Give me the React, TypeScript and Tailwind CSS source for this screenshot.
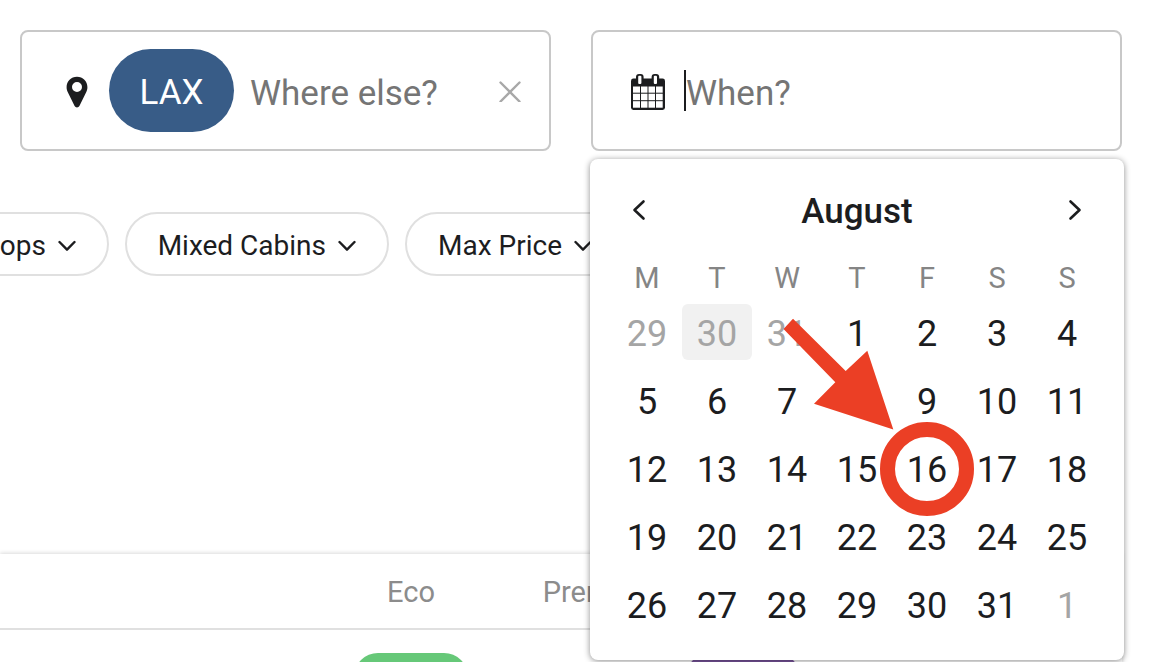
import { useState } from "react";

type Day = { n: number; muted?: boolean; today?: boolean; marked?: boolean };

const DAYS: Day[] = [
  { n: 29, muted: true },
  { n: 30, muted: true, today: true },
  { n: 31, muted: true },
  ...Array.from({ length: 31 }, (_, i) => ({ n: i + 1, marked: i + 1 === 16 })),
  { n: 1, muted: true },
];

const WEEKS = [0, 1, 2, 3, 4].map((w) => DAYS.slice(w * 7, w * 7 + 7));
const WEEKDAYS = ["M", "T", "W", "T", "F", "S", "S"];

function PinIcon() {
  return (
    <svg className="mt-0.5 h-8 w-[22px] shrink-0" viewBox="0 0 22 32" aria-hidden="true">
      <path
        fill="#1c1d1f"
        fillRule="evenodd"
        d="M11 .8C5.100.8.6 5.300.6 11c0 2 .3 3.300 1.100 4.900l6.900 14.200c.9 1.900 3.900 1.900 4.800 0l6.900-14.200c.8-1.600 1.100-2.900 1.100-4.900C21.400 5.300 16.900.8 11 .8zM11 6a5 5 0 1 1 0 10 5 5 0 0 1 0-10z"
      />
    </svg>
  );
}

function CalendarIcon() {
  const cols = [
    [2, 7],
    [10, 6.5],
    [17.5, 6.5],
    [25, 6.7],
  ];
  const rows = [
    [12.5, 6.2],
    [19.7, 6.5],
    [27.2, 6.5],
  ];
  return (
    <svg className="mt-0.5 h-9 w-[34px] shrink-0" viewBox="0 0 34 36" aria-hidden="true">
      <rect x="0" y="4.600" width="34" height="31.400" rx="2.400" fill="#1c1d1f" />
      {rows.map(([y, h]) =>
        cols.map(([x, w]) => <rect key={`${x}-${y}`} x={x} y={y} width={w} height={h} fill="#fff" />),
      )}
      <rect x="5" y="0" width="7.600" height="12" rx="3" fill="#1c1d1f" />
      <rect x="20.600" y="0" width="7.600" height="12" rx="3" fill="#1c1d1f" />
      <rect x="7.200" y="1.800" width="3.200" height="8.200" rx="1" fill="#fff" />
      <rect x="22.800" y="1.800" width="3.200" height="8.200" rx="1" fill="#fff" />
    </svg>
  );
}

function Chevron({ dir }: { dir: "left" | "right" }) {
  return (
    <svg className="h-6 w-4" viewBox="0 0 16 24" fill="none" stroke="#1c1d1f" strokeWidth="2.600" strokeLinecap="round" strokeLinejoin="round" aria-hidden="true">
      <path d={dir === "left" ? "M12.500 3.500 3.500 12l9 8.500" : "M3.500 3.500l9 8.500-9 8.500"} />
    </svg>
  );
}

function FilterPill({ label, className }: { label: string; className: string }) {
  return (
    <button
      type="button"
      className={`flex h-16 shrink-0 items-center justify-end gap-3 rounded-full border-2 border-[#e0e0e0] bg-white pt-1 pr-[31px] text-[28px] whitespace-nowrap ${className}`}
    >
      {label}
      <svg className="h-3 w-[18px]" viewBox="0 0 18 12" fill="none" stroke="#1c1d1f" strokeWidth="2.400" strokeLinecap="round" strokeLinejoin="round" aria-hidden="true">
        <path d="M1.500 2 9 9.700 16.500 2" />
      </svg>
    </button>
  );
}

function Pointer() {
  return (
    <svg
      className="pointer-events-none absolute top-[-125px] left-1/2 z-10 -ml-[147px] h-[205px] w-[200px] max-w-none"
      viewBox="780 315 200 205"
      aria-hidden="true"
    >
      <path fill="#eb3f25" d="M783.500 329 793 318.700 845.700 371 867.300 350.700 893.300 429.500 814 403.700 835.300 382.300z" />
      <circle cx="927" cy="469" r="39.500" fill="none" stroke="#eb3f25" strokeWidth="15" />
    </svg>
  );
}

function DatePicker() {
  const [, setSelected] = useState(16);
  return (
    <div className="absolute top-full right-[-2px] left-[-1px] z-10 mt-2 rounded-lg bg-white px-[22px] pt-[23px] pb-[22px] shadow-[0_1px_6px_rgba(0,0,0,0.45)]">
      <div className="flex h-14 items-center justify-between px-[19px]">
        <button type="button" aria-label="Previous month">
          <Chevron dir="left" />
        </button>
        <h2 className="pt-0.5 text-[35px] leading-none font-medium">August</h2>
        <button type="button" aria-label="Next month">
          <Chevron dir="right" />
        </button>
      </div>
      <table className="mt-5 w-full table-fixed border-collapse">
        <thead>
          <tr className="h-10">
            {WEEKDAYS.map((d, i) => (
              <th key={i} scope="col" className="p-0 text-[29px] leading-none font-normal text-[#858585]">
                {d}
              </th>
            ))}
          </tr>
        </thead>
        <tbody>
          {WEEKS.map((week, w) => (
            <tr key={w} className="h-[68px]">
              {week.map((day, i) => (
                <td key={i} className="p-0">
                  <div className="relative">
                    <button
                      type="button"
                      onClick={() => setSelected(day.n)}
                      className={`block h-14 w-full rounded-md pt-1 text-[36px] leading-none ${day.muted ? "text-[#a5a5a5]" : ""} ${day.today ? "bg-[#f1f1f1]" : ""}`}
                    >
                      {day.n}
                    </button>
                    {day.marked && <Pointer />}
                  </div>
                </td>
              ))}
            </tr>
          ))}
        </tbody>
      </table>
    </div>
  );
}

export default function App() {
  return (
    <div className="flex h-screen flex-col overflow-hidden bg-white font-['Roboto',sans-serif] text-[#1c1d1f]">
      <div className="grid grid-cols-2 gap-10 pt-[30px] pr-[30px] pl-5">
        <div className="flex h-[121px] items-center rounded-lg border-2 border-[#c8c8c8] pr-5 pl-11">
          <PinIcon />
          <span className="mr-4 ml-[21px] flex h-[83px] w-[125px] shrink-0 items-center justify-center rounded-full bg-[#385c87] pt-1.5 text-[35px] text-white">
            LAX
          </span>
          <input
            type="text"
            aria-label="Destination"
            placeholder="Where else?"
            className="h-14 min-w-0 flex-1 pt-1.5 text-[35px] outline-none placeholder:text-[#757575]"
          />
          <button type="button" aria-label="Clear" className="p-2">
            <svg className="h-[22px] w-[22px]" viewBox="0 0 22 22" fill="none" stroke="#a8a8a8" strokeWidth="2.400" strokeLinecap="round" aria-hidden="true">
              <path d="M1.500 2.500l19 19M20.500 2.500l-19 19" />
            </svg>
          </button>
        </div>
        <div className="relative">
          <div className="flex h-[121px] items-center rounded-lg border-2 border-[#c8c8c8] px-[38px]">
            <CalendarIcon />
            <span className="ml-[19px] h-[41px] w-0.5 shrink-0 bg-[#1c1d1f]" />
            <input
              type="text"
              aria-label="Date"
              placeholder="When?"
              className="h-14 min-w-0 flex-1 pt-1.5 text-[35px] outline-none placeholder:text-[#757575]"
            />
          </div>
          <DatePicker />
        </div>
      </div>

      <div className="mt-[61px] -ml-16 flex gap-4">
        <FilterPill label="Stops" className="w-[173px]" />
        <FilterPill label="Mixed Cabins" className="w-[264px]" />
        <FilterPill label="Max Price" className="w-[220px]" />
      </div>

      <div className="mt-[278px] mr-[30px] flex-1 shadow-[0_-1px_4px_rgba(0,0,0,0.15)]">
        <table className="w-full table-fixed border-collapse">
          <colgroup>
            <col className="w-[328px]" />
            <col className="w-[166px]" />
            <col className="w-[166px]" />
            <col className="w-[166px]" />
            <col />
          </colgroup>
          <thead>
            <tr className="h-[75px] border-b-2 border-[#e0e0e0] text-[29px] text-[#8c8c8c]">
              <td />
              <th scope="col" className="p-0 pt-1 font-normal">
                Eco
              </th>
              <th scope="col" className="p-0 pt-1 font-normal">
                Prem
              </th>
              <td />
              <td />
            </tr>
          </thead>
          <tbody>
            <tr>
              <td />
              <td className="p-0 pt-[23px]">
                <div className="mx-auto h-14 w-[114px] rounded-[24px] bg-[#66c878]" />
              </td>
              <td />
              <td className="p-0 pt-[23px]">
                <div className="mx-auto h-14 w-[114px] rounded-[24px] bg-[#7a559e]" />
              </td>
              <td />
            </tr>
          </tbody>
        </table>
      </div>
    </div>
  );
}
